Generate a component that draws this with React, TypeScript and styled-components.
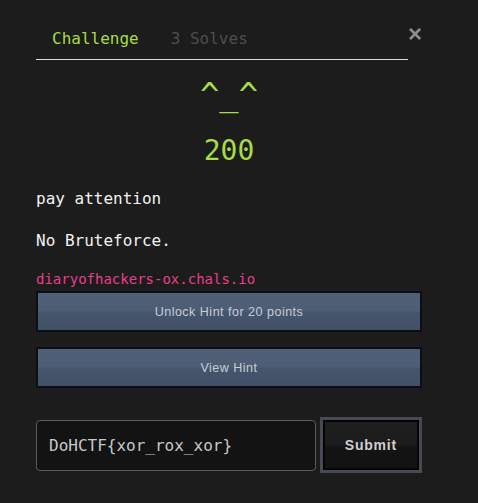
import React from 'react';
import styled, { createGlobalStyle } from 'styled-components';

const GlobalStyle = createGlobalStyle`
  html, body {
    margin: 0;
    padding: 0;
    background: #1c1c1c;
  }
  body {
    font-family: 'DejaVu Sans Mono', monospace;
  }
`;

const Root = styled.div`
  width: 478px;
  height: 503px;
  box-sizing: border-box;
  padding: 19px 56px 0 36px;
  background: #1c1c1c;
  display: flex;
  flex-direction: column;
`;

const Header = styled.div`
  display: flex;
  align-items: flex-start;
`;

const Tabs = styled.ul`
  display: flex;
  flex: 1;
  margin: 0;
  padding: 0;
  list-style: none;
  border-bottom: 1px solid #dcdcdc;
`;

const Tab = styled.li<{ active?: boolean }>`
  padding: 8px 16px;
  font-size: 16px;
  line-height: 24px;
  color: ${(p) => (p.active ? '#a6dc44' : '#4e4e4e')};
`;

const Close = styled.button`
  border: 0;
  background: none;
  padding: 0;
  width: 14px;
  height: 30px;
  display: flex;
  justify-content: flex-end;
  color: #8c8c8c;
  font-family: 'Liberation Sans', sans-serif;
  font-weight: 700;
  font-size: 24px;
  line-height: 30px;
  cursor: pointer;
`;

const Face = styled.div`
  margin-top: 16px;
  text-align: center;
  font-size: 32px;
  line-height: 38px;
  color: #a6dc44;
`;

const Points = styled.div`
  margin-top: 20px;
  text-align: center;
  font-size: 28px;
  line-height: 34px;
  color: #a6dc44;
`;

const Text = styled.p<{ gap?: number }>`
  margin: ${(p) => p.gap ?? 19}px 0 0;
  font-size: 16px;
  line-height: 24px;
  color: #f2f2f2;
`;

const Link = styled.code`
  display: block;
  margin-top: 16px;
  font-family: 'DejaVu Sans Mono', monospace;
  font-size: 14px;
  line-height: 21px;
  color: #e83e8c;
`;

const HintButton = styled.button<{ first?: boolean }>`
  display: block;
  width: 100%;
  height: 41px;
  margin-top: ${(p) => (p.first ? '1px' : '15px')};
  border: 2px solid #0b0f15;
  background: linear-gradient(#506079 0%, #4d5d74 48%, #45556b 52%, #415067 100%);
  color: #c9ced6;
  font-family: 'Liberation Sans', sans-serif;
  font-size: 12.5px;
  letter-spacing: 0.5px;
  cursor: pointer;
`;

const SubmitRow = styled.form`
  margin-top: 29px;
  display: flex;
  align-items: center;
  gap: 4px;
`;

const FlagInput = styled.input`
  width: 282px;
  height: 51px;
  box-sizing: border-box;
  padding: 0 12px;
  border: 1px solid #5c5c5c;
  border-radius: 4px;
  background: #131313;
  color: #c8c8c8;
  font-family: 'DejaVu Sans Mono', monospace;
  font-size: 16px;
  outline: none;
`;

const SubmitButton = styled.button`
  width: 103px;
  height: 56px;
  box-sizing: border-box;
  border: 3px solid #464b53;
  box-shadow: inset 0 0 0 2px #050505;
  background: linear-gradient(#1f1f1f 0%, #1c1c1c 50%, #141414 52%, #121212 100%);
  color: #cfcfcf;
  font-family: 'Liberation Sans', sans-serif;
  font-weight: 700;
  font-size: 14px;
  letter-spacing: 0.8px;
  cursor: pointer;
`;

export default function App() {
  return (
    <>
      <GlobalStyle />
      <Root>
        <Header>
          <Tabs>
            <Tab active>Challenge</Tab>
            <Tab>3 Solves</Tab>
          </Tabs>
          <Close aria-label="Close">×</Close>
        </Header>
        <Face>^_^</Face>
        <Points>200</Points>
        <Text>pay attention</Text>
        <Text gap={18}>No Bruteforce.</Text>
        <Link>diaryofhackers-ox.chals.io</Link>
        <HintButton first>Unlock Hint for 20 points</HintButton>
        <HintButton>View Hint</HintButton>
        <SubmitRow onSubmit={(e) => e.preventDefault()}>
          <FlagInput defaultValue="DoHCTF{xor_rox_xor}" />
          <SubmitButton type="submit">Submit</SubmitButton>
        </SubmitRow>
      </Root>
    </>
  );
}
